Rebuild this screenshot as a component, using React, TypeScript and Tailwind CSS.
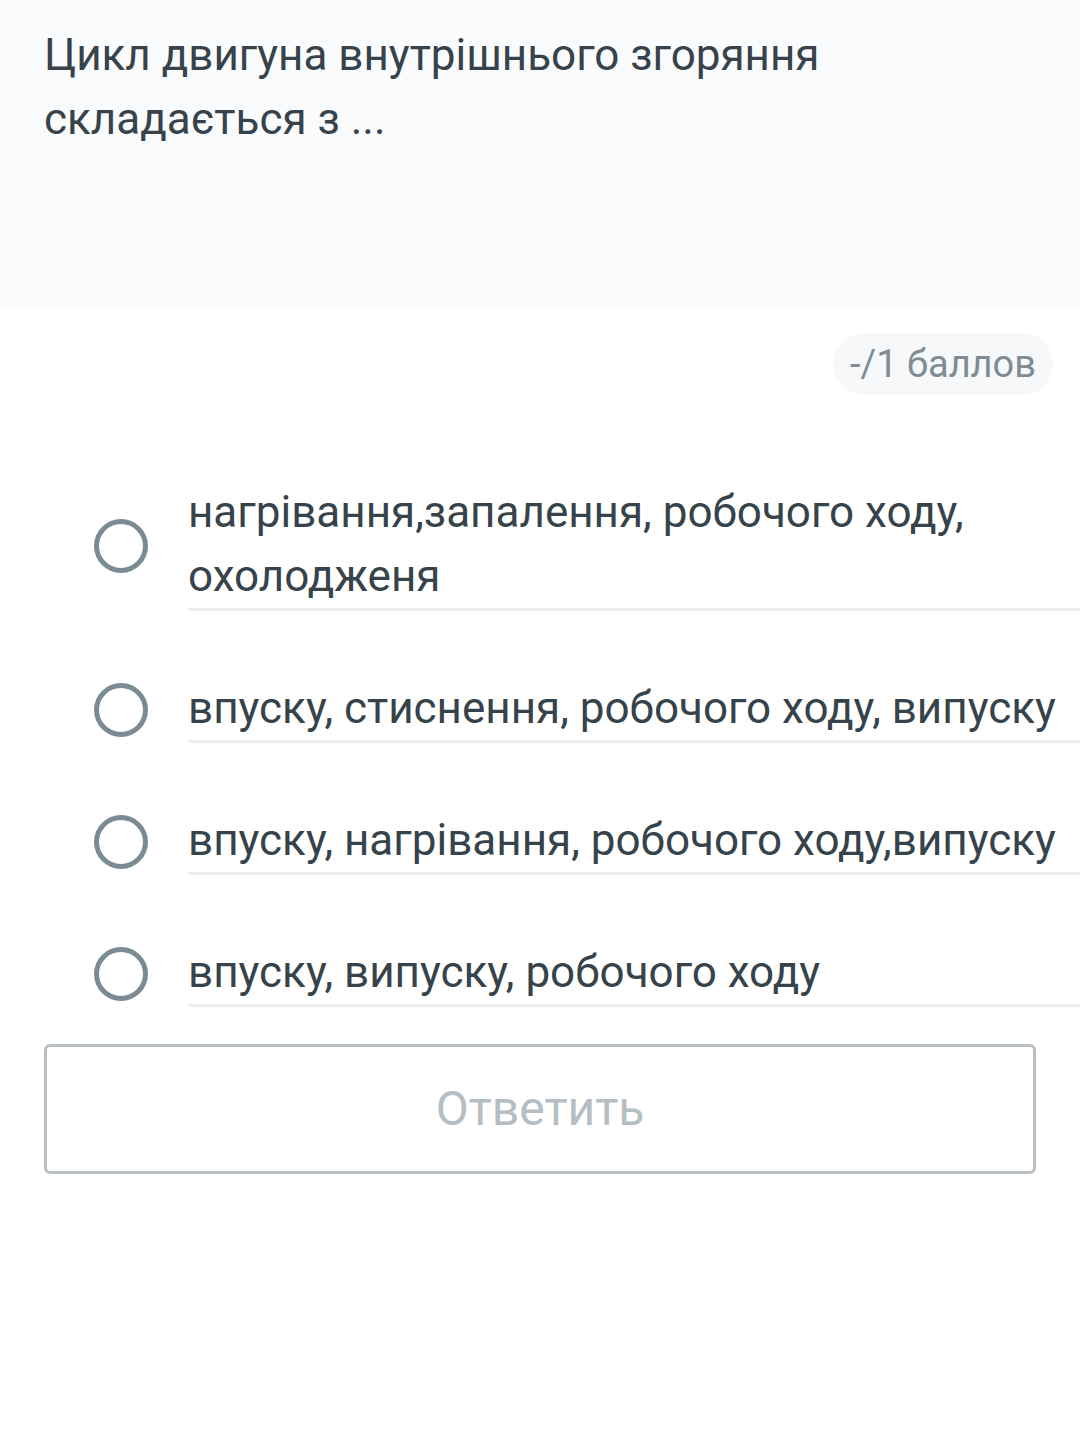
import React from "react";

const options = [
  "нагрівання,запалення, робочого ходу, охолодженя",
  "впуску, стиснення, робочого ходу, випуску",
  "впуску, нагрівання, робочого ходу,випуску",
  "впуску, випуску, робочого ходу",
];

export default function App() {
  return (
    <div className="w-[1080px] h-[1438px] bg-white" style={{ fontFamily: "Roboto, 'Noto Sans', sans-serif" }}>
      <div className="h-[306px] bg-[#f9fbfc] px-[44px] pt-[23px]">
        <p className="text-[44px] leading-[64px] text-[#37424a] pr-[200px]">
          Цикл двигуна внутрішнього згоряння складається з ...
        </p>
      </div>
      <div className="flex justify-end pr-[27px] pt-[27px]">
        <div className="h-[62px] px-[17px] rounded-full bg-[#f6f8f9] flex items-center text-[38px] text-[#7f8c93]">
          -/1 баллов
        </div>
      </div>
      <div className="mt-[16px]">
        {options.map((o, i) => (
          <div key={i} className="flex items-center mt-[65px] first:mt-[85px]">
            <div className="w-[188px] flex pl-[94px] shrink-0">
              <div className="w-[54px] h-[54px] rounded-full border-[5px] border-[#7a8b94]" />
            </div>
            <div className="flex-1 border-b-[3px] border-[#eceff0] text-[44px] leading-[64px] text-[#37434a] pr-[10px]">
              {o}
            </div>
          </div>
        ))}
      </div>
      <div className="px-[44px] mt-[37px]">
        <div className="w-[992px] h-[130px] border-[3px] border-[#b8c0c4] rounded-[6px] flex items-center justify-center text-[48px] text-[#b4bec3]">
          Ответить
        </div>
      </div>
    </div>
  );
}
